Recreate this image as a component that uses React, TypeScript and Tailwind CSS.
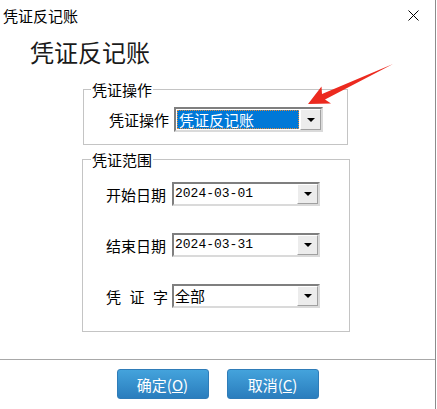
import React from 'react';

const cjk = "font-['Noto_Sans_CJK_SC',sans-serif]";

function DropButton() {
  return (
    <div className="w-[21px] h-full flex items-center justify-center bg-[#ececec] border border-t-white border-l-white border-b-[#a0a0a0] border-r-[#a0a0a0]">
      <svg width="8" height="4" viewBox="0 0 8 4">
        <polygon points="0,0 8,0 4,4" fill="#000" />
      </svg>
    </div>
  );
}

function Combo({ value, mono = false }: { value: string; mono?: boolean }) {
  return (
    <div className="w-[148px] h-[24px] flex border-2 border-t-[#7f7f7f] border-l-[#7f7f7f] border-b-[#dadada] border-r-[#dadada] bg-white">
      <div
        className={
          mono
            ? "flex-1 pl-[1px] flex items-center text-[13px] font-['Liberation_Mono',monospace] text-black"
            : "flex-1 pl-[1px] flex items-center text-[15px] text-black"
        }
      >
        {value}
      </div>
      <DropButton />
    </div>
  );
}

function SelectedCombo({ value }: { value: string }) {
  return (
    <div className="w-[149px] h-[25px] flex border-2 border-t-[#7f7f7f] border-l-[#7f7f7f] border-b-[#dadada] border-r-[#dadada] bg-white">
      <div className="flex-1 p-[1px]">
        <div className="h-full flex items-center pl-[1px] bg-[#0078d7] border border-dotted border-[#e08a3c] text-white text-[15px] leading-none">
          {value}
        </div>
      </div>
      <DropButton />
    </div>
  );
}

function Row({ label, children }: { label: React.ReactNode; children: React.ReactNode }) {
  return (
    <div className="flex items-center gap-[4px]">
      <div className="w-[62px] text-[15px] leading-[17px] text-black">{label}</div>
      {children}
    </div>
  );
}

export default function App() {
  return (
    <div className={`w-[437px] h-[409px] bg-white relative overflow-hidden ${cjk}`}>
      <div className="w-[436px] h-full border-r border-[#8c8c8c] flex flex-col">
        {/* title bar */}
        <div className="h-[31px] flex items-center justify-between pl-[3px] pr-[16px]">
          <span className="text-[15px] leading-[17px] text-black">凭证反记账</span>
          <svg width="11" height="11" viewBox="0 0 11 11">
            <path d="M0.5 0.5 L10.5 10.5 M10.5 0.5 L0.5 10.5" stroke="#000" strokeWidth="1" />
          </svg>
        </div>

        {/* heading */}
        <div className="mt-[9px] pl-[30px] h-[24px] text-[24px] leading-[24px] text-[#1a1a1a]">凭证反记账</div>

        {/* group 1 */}
        <fieldset className="mt-[17px] ml-[83px] w-[265px] border border-[#c4c4c4] pt-[9px] pb-[12px]">
          <legend className="ml-[7px] px-[1px] text-[15px] leading-[17px] text-black">凭证操作</legend>
          <div className="pl-[25px] flex items-center gap-[5px]">
            <div className="w-[60px] text-[15px] leading-[17px] text-black">凭证操作</div>
            <SelectedCombo value="凭证反记账" />
          </div>
        </fieldset>

        {/* group 2 */}
        <fieldset className="mt-[6px] ml-[82px] w-[268px] border border-[#c4c4c4] pt-[14px] pb-[23px]">
          <legend className="ml-[8px] px-[1px] text-[15px] leading-[17px] text-black">凭证范围</legend>
          <div className="pl-[23px] flex flex-col gap-[27px]">
            <Row label="开始日期">
              <Combo value="2024-03-01" mono />
            </Row>
            <Row label="结束日期">
              <Combo value="2024-03-31" mono />
            </Row>
            <Row
              label={
                <div className="flex justify-between">
                  <span>凭</span>
                  <span>证</span>
                  <span>字</span>
                </div>
              }
            >
              <Combo value="全部" />
            </Row>
          </div>
        </fieldset>

        {/* separator */}
        <div className="mt-[27px] h-px bg-[#a8a8a8]" />

        {/* buttons */}
        <div className="mt-[9px] flex justify-center gap-[18px]">
          <button className="w-[92px] h-[30px] rounded-[3px] border border-[#2f7cb8] bg-linear-to-b from-[#44a3dc] to-[#2a7dbd] text-white text-[15px] leading-none">
            确定(<span className="underline">O</span>)
          </button>
          <button className="w-[92px] h-[30px] rounded-[3px] border border-[#2f7cb8] bg-linear-to-b from-[#44a3dc] to-[#2a7dbd] text-white text-[15px] leading-none">
            取消(<span className="underline">C</span>)
          </button>
        </div>
      </div>

      {/* annotation arrow */}
      <svg className="absolute left-0 top-0 pointer-events-none" width="437" height="409" viewBox="0 0 437 409">
        <polygon
          points="308,104 321.5,86.5 322,94 393,64 325,99.5 331,103.5"
          fill="#ec2a1f"
        />
      </svg>
    </div>
  );
}
